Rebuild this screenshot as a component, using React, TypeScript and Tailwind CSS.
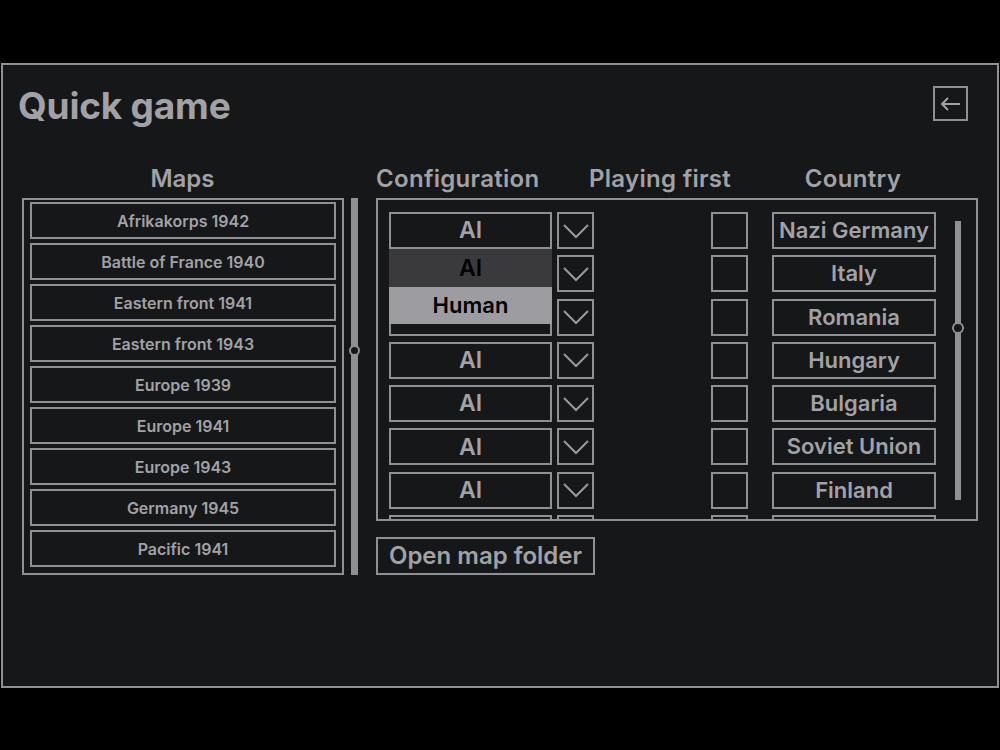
import React from "react";

const maps = [
  "Afrikakorps 1942",
  "Battle of France 1940",
  "Eastern front 1941",
  "Eastern front 1943",
  "Europe 1939",
  "Europe 1941",
  "Europe 1943",
  "Germany 1945",
  "Pacific 1941",
];

const countries = [
  "Nazi Germany",
  "Italy",
  "Romania",
  "Hungary",
  "Bulgaria",
  "Soviet Union",
  "Finland",
  "",
];

function Chevron() {
  return (
    <svg width="26" height="16" viewBox="0 0 26 16" fill="none">
      <polyline points="1,2 13,14 25,2" stroke="#9a9a9e" strokeWidth="2" />
    </svg>
  );
}

export default function App() {
  return (
    <div
      className="w-[1000px] h-[750px] bg-black pt-[63px] px-[1px] text-[#a2a2a6]"
      style={{ fontFamily: "Inter, 'Noto Sans', sans-serif" }}
    >
      <div className="h-[625px] border-2 border-[#8f8f94] bg-[#161719] flex flex-col">
        {/* Title row */}
        <div className="flex items-start justify-between pl-[15px] pr-[29px] pt-[19px]">
          <div className="text-[37px] leading-[44px] font-bold tracking-[-0.2px]">Quick game</div>
          <div className="mt-[2px] w-[35px] h-[35px] border-2 border-[#8f8f94] flex items-center justify-center">
            <svg width="22" height="16" viewBox="0 0 22 16" fill="none">
              <line x1="2" y1="8" x2="20" y2="8" stroke="#a2a2a6" strokeWidth="2" />
              <polyline points="8,2 2,8 8,14" stroke="#a2a2a6" strokeWidth="2" fill="none" />
            </svg>
          </div>
        </div>

        <div className="flex pl-[19px] mt-[36px]">
          {/* Maps column */}
          <div className="flex flex-col w-[338px]">
            <div className="w-[321px] text-center text-[24px] leading-[30px] font-semibold h-[34px]">Maps</div>
            <div className="flex gap-[7px]">
              <div className="w-[322px] h-[377px] border-2 border-[#8f8f94] px-[6px] pt-[2px] flex flex-col gap-[4px]">
                {maps.map((m) => (
                  <div
                    key={m}
                    className="h-[37px] shrink-0 border-2 border-[#8f8f94] flex items-center justify-center text-[16px] font-semibold"
                  >
                    {m}
                  </div>
                ))}
              </div>
              <div className="relative w-[7px] h-[377px] bg-[#8f8f94]">
                <div className="absolute left-[-2px] top-[147px] w-[11px] h-[11px] rounded-full border-2 border-[#8f8f94] bg-[#161719]" />
              </div>
            </div>
          </div>

          {/* Right side */}
          <div className="flex flex-col ml-[16px]">
            <div className="flex h-[34px] text-[24px] leading-[30px] font-semibold tracking-[0.3px]">
              <div className="w-[213px]">Configuration</div>
              <div className="w-[190px] whitespace-nowrap">Playing first</div>
              <div className="w-[148px] text-center">Country</div>
            </div>
            <div className="relative w-[602px] h-[323px] border-2 border-[#8f8f94] overflow-hidden">
              <div className="flex flex-col gap-[6.3px] pl-[11px] pt-[12px]">
                {countries.map((c, i) => (
                  <div key={i} className="flex h-[37px] shrink-0">
                    <div className="w-[163px] border-2 border-[#8f8f94] flex items-center justify-center text-[23px] font-semibold">
                      {c && i !== 1 && i !== 2 ? "AI" : ""}
                    </div>
                    <div className="ml-[5px] w-[37px] border-2 border-[#8f8f94] flex items-center justify-center">
                      {c ? <Chevron /> : null}
                    </div>
                    <div className="ml-[117px] w-[37px] border-2 border-[#8f8f94]" />
                    <div className="ml-[24px] w-[164px] border-2 border-[#8f8f94] flex items-center justify-center text-[22px] font-semibold whitespace-nowrap">
                      {c}
                    </div>
                  </div>
                ))}
              </div>
              {/* scrollbar */}
              <div className="absolute left-[577px] top-[21px] w-[6px] h-[279px] bg-[#8f8f94]">
                <div className="absolute left-[-3px] top-[101px] w-[12px] h-[12px] rounded-full border-2 border-[#8f8f94] bg-[#161719]" />
              </div>
              {/* dropdown popup */}
              <div className="absolute left-[11px] top-[49px] w-[163px] flex flex-col">
                <div className="h-[38px] bg-[#3a3a3c] text-black flex items-center justify-center text-[23px] font-semibold">AI</div>
                <div className="h-[37px] bg-[#9d9da1] text-black flex items-center justify-center text-[22px] font-semibold">Human</div>
              </div>
            </div>
            <div className="mt-[16px] w-[219px] h-[38px] border-2 border-[#8f8f94] flex items-center justify-center text-[24px] font-semibold">
              Open map folder
            </div>
          </div>
        </div>
      </div>
    </div>
  );
}
